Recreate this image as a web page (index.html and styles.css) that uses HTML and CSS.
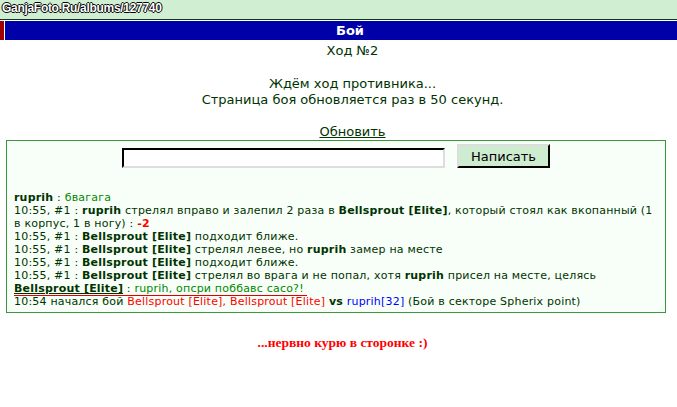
FILE: index.html
```html
<!DOCTYPE html>
<html lang="ru">
<head>
    <meta charset="UTF-8">
    <title>Бой</title>
    <link rel="stylesheet" href="styles.css">
</head>
<body>
    <div class="topbar">
        <span class="watermark">GanjaFoto.Ru/albums/127740</span>
    </div>
    <div class="titlebar">
        <span class="mark"></span>
        <div class="title">Бой</div>
    </div>

    <div class="status">
        <p>Ход №2</p>
        <p class="wait">Ждём ход противника...<br>Страница боя обновляется раз в 50 секунд.</p>
        <p class="refresh"><a href="#">Обновить</a></p>
    </div>

    <div class="chatbox">
        <form class="say">
            <input type="text" class="say-input">
            <button type="button" class="say-btn">Написать</button>
        </form>

        <div class="log">
            <div><b>ruprih</b> : <span class="msg">бвагага</span></div>
            <div>10:55, #1 : <b>ruprih</b> стрелял вправо и залепил 2 раза в <b>Bellsprout [Elite]</b>, который стоял как вкопанный (1 в корпус, 1 в ногу) : <b class="dmg">-2</b></div>
            <div>10:55, #1 : <b>Bellsprout [Elite]</b> подходит ближе.</div>
            <div>10:55, #1 : <b>Bellsprout [Elite]</b> стрелял левее, но <b>ruprih</b> замер на месте</div>
            <div>10:55, #1 : <b>Bellsprout [Elite]</b> подходит ближе.</div>
            <div>10:55, #1 : <b>Bellsprout [Elite]</b> стрелял во врага и не попал, хотя <b>ruprih</b> присел на месте, целясь</div>
            <div><span class="private"><b class="nick">Bellsprout [Elite]</b> : <span class="msg">ruprih, опсри поббавс сасо?!</span>&nbsp;</span></div>
            <div>10:54 начался бой <span class="team-red">Bellsprout [Elite], Bellsprout [Elite]</span> <b>vs</b> <span class="team-blue">ruprih[32]</span> (Бой в секторе Spherix point)</div>
        </div>
    </div>

    <div class="footer">...нервно курю в сторонке :)</div>
</body>
</html>
```

FILE: styles.css
```css
body {
    margin: 0;
    background: #fff;
    color: #003300;
    font-family: "DejaVu Sans", Verdana, sans-serif;
    font-size: 13px;
}

/* top strip */
.topbar {
    position: relative;
    height: 19px;
    background: #d0eed2;
    border-bottom: 1px solid #0c3a14;
}

.watermark {
    position: absolute;
    left: 2px;
    top: 1px;
    font-family: "Liberation Sans", Arial, sans-serif;
    font-size: 12px;
    font-weight: bold;
    letter-spacing: -0.3px;
    color: #fff;
    text-shadow: 1px 0 0 #000, -1px 0 0 #000, 0 1px 0 #000, 0 -1px 0 #000;
}

.titlebar {
    display: flex;
    margin-top: 1px;
    height: 19px;
}

.mark {
    width: 4px;
    background: #a00000;
    margin-right: 1px;
}

.title {
    flex: 1;
    background: #0000a8;
    color: #fff;
    font-weight: bold;
    text-align: center;
    line-height: 19px;
    padding-left: 18px;
}

/* status */
.status {
    text-align: center;
    padding-left: 28px;
}

.status p {
    margin: 0;
    line-height: 16px;
}

.status p:first-child {
    margin-top: 3px;
}

.wait {
    padding-top: 17px;
}

.refresh {
    padding-top: 16px;
}

.refresh a {
    color: #003300;
}

/* chat box */
.chatbox {
    margin: 0 11px 0 6px;
    border: 1px solid #3a973a;
    background: #f8fff8;
    padding: 3px 7px 4px;
}

.say {
    display: flex;
    justify-content: center;
    align-items: center;
    gap: 12px;
    margin: 0 0 23px 0;
}

.say-input {
    width: 323px;
    height: 20px;
    box-sizing: border-box;
    border: 2px inset #ddd;
    border-top-color: #555;
    border-left-color: #555;
    background: #fff;
    margin: 3px 0 0 0;
}

.say-btn {
    width: 93px;
    height: 24px;
    background: #ceeccf;
    border: 2px outset #ddd;
    border-right-color: #222;
    border-bottom-color: #222;
    font-family: "DejaVu Sans", Verdana, sans-serif;
    font-size: 13px;
    color: #000;
    padding: 0;
}

.log {
    font-size: 11px;
    line-height: 13px;
    letter-spacing: 0.2px;
}

.msg {
    color: #008800;
}

.dmg {
    color: #ff0000;
}

.private {
    border-bottom: 1px solid #e00000;
}

.nick {
    text-decoration: underline;
}

.team-red {
    color: #ff0000;
}

.team-blue {
    color: #0000ff;
}

.footer {
    text-align: center;
    margin-top: 22px;
    padding-left: 8px;
    font-family: "Liberation Serif", "Times New Roman", serif;
    font-weight: bold;
    font-size: 13.5px;
    color: #ff0000;
}
```
